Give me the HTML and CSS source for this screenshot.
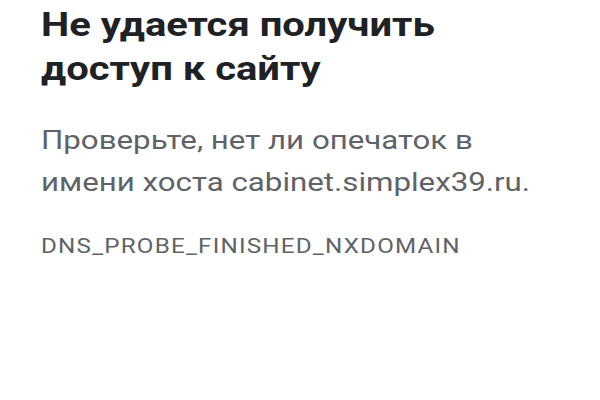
FILE: index.html
```html
<!DOCTYPE html>
<html lang="ru">
<head>
<meta charset="utf-8">
<link rel="stylesheet" href="styles.css">
</head>
<body>
<main class="error">
  <h1 class="error-title">Не удается получить доступ к сайту</h1>
  <p class="error-text">Проверьте, нет ли опечаток в имени хоста cabinet.simplex39.ru.</p>
  <div class="error-code">DNS_PROBE_FINISHED_NXDOMAIN</div>
</main>
</body>
</html>
```

FILE: styles.css
```css
html, body {
  margin: 0;
  padding: 0;
  background: #ffffff;
}
body {
  font-family: Roboto, "Noto Sans", "Liberation Sans", sans-serif;
  width: 600px;
  height: 400px;
  overflow: hidden;
}
.error {
  padding: 3px 0 0 41px;
  width: 440px;
}
.error-title,
.error-text,
.error-code {
  transform-origin: left top;
}
.error-title {
  margin: 0;
  font-size: 33px;
  font-weight: 700;
  line-height: 44px;
  color: #202124;
  width: 340px;
  transform: scaleX(1.21);
}
.error-text {
  margin: 29px 0 0;
  font-size: 25px;
  line-height: 42px;
  color: #5f6368;
  width: 400px;
  transform: scaleX(1.25);
}
.error-code {
  margin-top: 30px;
  font-size: 20px;
  line-height: 24px;
  letter-spacing: 1px;
  color: #5f6368;
  width: 340px;
  white-space: nowrap;
  transform: scaleX(1.21);
}
```
